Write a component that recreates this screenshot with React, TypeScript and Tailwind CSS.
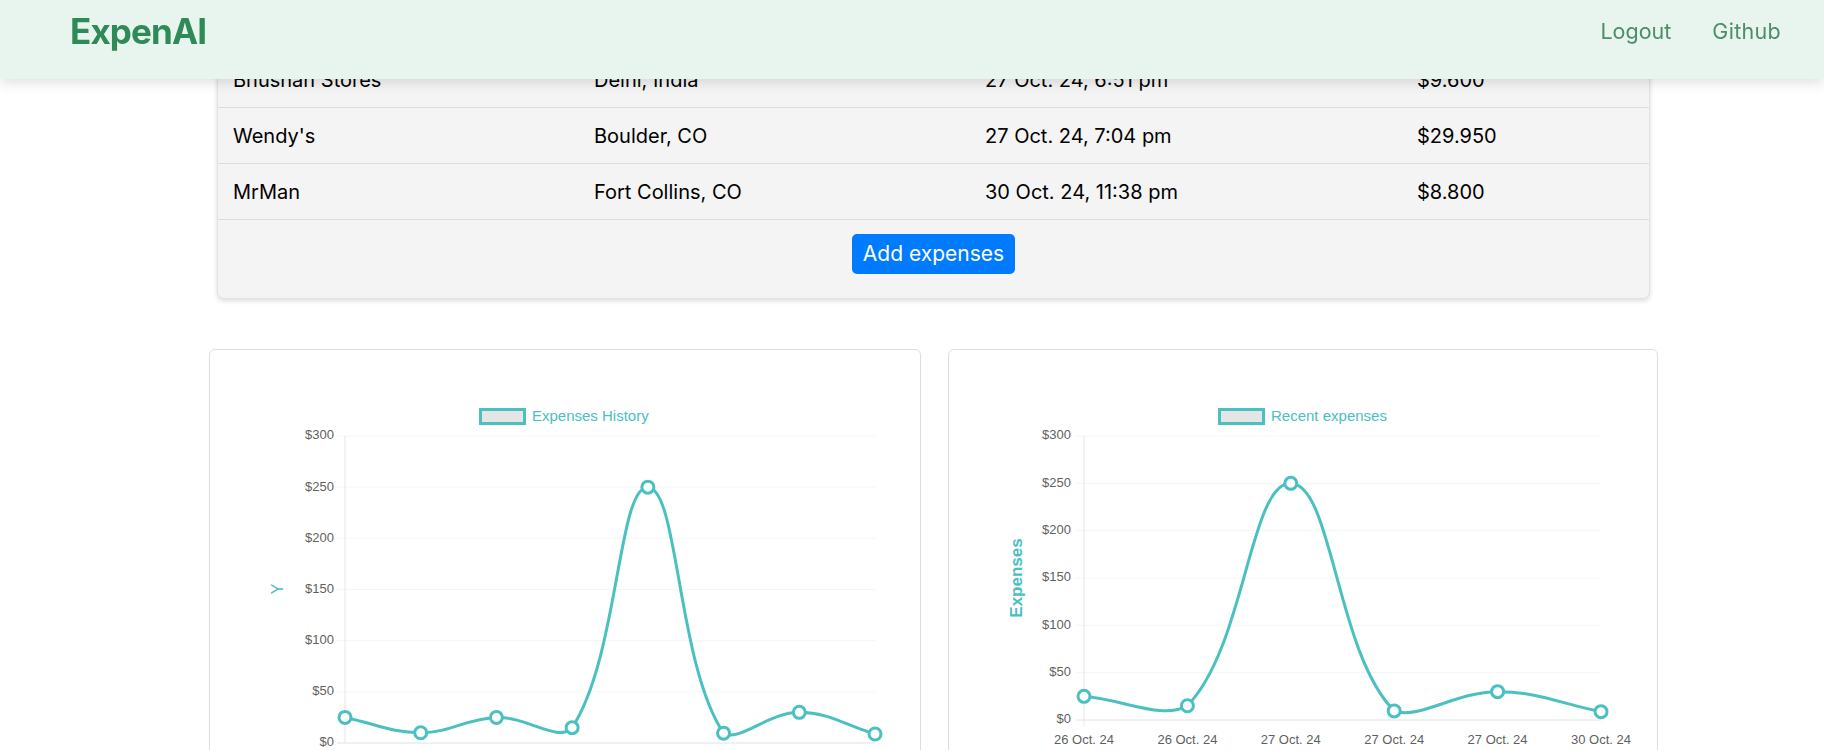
import React from "react";

const TEAL = "#4bc0c0";

type Pt = { x: number; y: number };

// chart.js style spline (tension 0.4, control points capped to the chart area)
function splinePath(pts: Pt[], top: number, bottom: number, t = 0.4) {
  const cps = pts.map((cur, i) => {
    const prev = pts[i - 1] ?? cur;
    const next = pts[i + 1] ?? cur;
    const d01 = Math.hypot(cur.x - prev.x, cur.y - prev.y);
    const d12 = Math.hypot(next.x - cur.x, next.y - cur.y);
    let s01 = d01 / (d01 + d12);
    let s12 = d12 / (d01 + d12);
    if (isNaN(s01)) s01 = 0;
    if (isNaN(s12)) s12 = 0;
    const fa = t * s01;
    const fb = t * s12;
    const cap = (y: number) => Math.min(bottom, Math.max(top, y));
    return {
      p: { x: cur.x - fa * (next.x - prev.x), y: cap(cur.y - fa * (next.y - prev.y)) },
      n: { x: cur.x + fb * (next.x - prev.x), y: cap(cur.y + fb * (next.y - prev.y)) },
    };
  });
  let d = `M ${pts[0].x} ${pts[0].y}`;
  for (let i = 1; i < pts.length; i++) {
    const a = cps[i - 1].n;
    const b = cps[i].p;
    d += ` C ${a.x} ${a.y} ${b.x} ${b.y} ${pts[i].x} ${pts[i].y}`;
  }
  return d;
}

type ChartProps = {
  legend: string;
  values: number[];
  labels?: string[];
  axisTitle: string;
  boldTitle?: boolean;
  titleY: number;
  tickRight: number;
  left: number;
  right: number;
  top: number;
  bottom: number;
};

function LineChart({ legend, values, labels, axisTitle, boldTitle, titleY, tickRight, left, right, top, bottom }: ChartProps) {
  const ticks = [0, 50, 100, 150, 200, 250, 300];
  const yOf = (v: number) => bottom - (v / 300) * (bottom - top);
  const step = (right - left) / (values.length - 1);
  const pts = values.map((v, i) => ({ x: left + i * step, y: yOf(v) }));
  const font = "'Liberation Sans', Arial, sans-serif";

  return (
    <svg width="100%" height="480" className="block">
      {/* legend */}
      <rect x={270.5} y={59.5} width={44} height={14} fill="#e5e5e5" stroke={TEAL} strokeWidth={3} />
      <text x={322} y={67} fill={TEAL} fontSize={15} fontFamily={font} dominantBaseline="middle">
        {legend}
      </text>

      {/* grid + ticks */}
      {ticks.map((v) => (
        <g key={v}>
          <line x1={left - 8} x2={right} y1={yOf(v)} y2={yOf(v)} stroke={v === 0 ? "#dde4e4" : "#eef8f8"} strokeWidth={1} />
          <text x={tickRight} y={yOf(v)} fill="#5f5f5f" fontSize={13} fontFamily={font} textAnchor="end" dominantBaseline="middle">
            ${v}
          </text>
        </g>
      ))}
      <line x1={left} x2={left} y1={top} y2={bottom + (labels ? 6 : 0)} stroke="#e3e6e6" strokeWidth={1} />

      {/* axis title */}
      <text
        x={69}
        y={titleY}
        fill={TEAL}
        fontSize={boldTitle ? 17 : 16}
        fontWeight={boldTitle ? 700 : 400}
        fontFamily={font}
        textAnchor="middle"
        dominantBaseline="middle"
        transform={`rotate(-90 69 ${titleY})`}
      >
        {axisTitle}
      </text>

      {/* x labels */}
      {labels?.map((l, i) => (
        <text key={i} x={left + i * step} y={bottom + 21} fill="#5f5f5f" fontSize={13} fontFamily={font} textAnchor="middle" dominantBaseline="middle">
          {l}
        </text>
      ))}

      <path d={splinePath(pts, top, bottom)} fill="none" stroke={TEAL} strokeWidth={3} />
      {pts.map((p, i) => (
        <circle key={i} cx={p.x} cy={p.y} r={6} fill="#fff" stroke={TEAL} strokeWidth={3} />
      ))}
    </svg>
  );
}

const rows = [
  { name: "Merchant", place: "Location", date: "Date", amount: "Amount" },
  { name: "Bhushan Stores", place: "Delhi, India", date: "27 Oct. 24, 6:51 pm", amount: "$9.600" },
  { name: "Wendy's", place: "Boulder, CO", date: "27 Oct. 24, 7:04 pm", amount: "$29.950" },
  { name: "MrMan", place: "Fort Collins, CO", date: "30 Oct. 24, 11:38 pm", amount: "$8.800" },
];

export default function App() {
  return (
    <div className="min-h-screen bg-white font-['Inter',sans-serif] text-black overflow-hidden">
      <header className="fixed top-0 inset-x-0 z-10 h-[79px] bg-[#e8f5ee] shadow-[0_4px_12px_rgba(0,0,0,0.12)] flex items-center justify-between pl-[70px] pr-[43px] pb-[16px]">
        <span className="text-[35px] font-bold text-[#2e8b57] tracking-tight">ExpenAI</span>
        <nav className="flex gap-[41px] text-[21.5px] text-[#4d8d68]">
          <span>Logout</span>
          <span className="tracking-[0.3px]">Github</span>
        </nav>
      </header>

      <main className="ml-[209px] w-[1449px] -mt-[4px]">
        <div className="mx-[8px] bg-[#f4f4f4] rounded-b-[7px] border border-t-0 border-[#e2e2e2] shadow-[0_2px_5px_rgba(0,0,0,0.14)]">
          {rows.map((r) => (
            <div key={r.name} className="h-[56px] border-b border-[#dcdcdc] grid grid-cols-[361px_391px_432px_1fr] items-center pl-[15px] text-[20px]">
              <span>{r.name}</span>
              <span>{r.place}</span>
              <span>{r.date}</span>
              <span>{r.amount}</span>
            </div>
          ))}
          <div className="flex justify-center pt-[14px] pb-[24px]">
            <button className="h-[40px] px-[11px] rounded-[5px] bg-[#007bff] text-white text-[21px]">Add expenses</button>
          </div>
        </div>

        <div className="mt-[50px] grid grid-cols-[712px_710px] gap-[27px]">
          <div className="bg-white border border-[#dedede] rounded-[6px] h-[480px]">
            <LineChart
              legend="Expenses History"
              values={[25, 10, 25, 15, 250, 9.6, 29.95, 8.8]}
              axisTitle="Y"
              titleY={239}
              tickRight={124}
              left={135}
              right={665}
              top={86}
              bottom={393}
            />
          </div>
          <div className="bg-white border border-[#dedede] rounded-[6px] h-[480px]">
            <LineChart
              legend="Recent expenses"
              values={[25, 15, 250, 9.6, 29.95, 8.8]}
              labels={["26 Oct. 24", "26 Oct. 24", "27 Oct. 24", "27 Oct. 24", "27 Oct. 24", "30 Oct. 24"]}
              axisTitle="Expenses"
              boldTitle
              titleY={228}
              tickRight={122}
              left={135}
              right={652}
              top={86}
              bottom={370}
            />
          </div>
        </div>
      </main>
    </div>
  );
}
